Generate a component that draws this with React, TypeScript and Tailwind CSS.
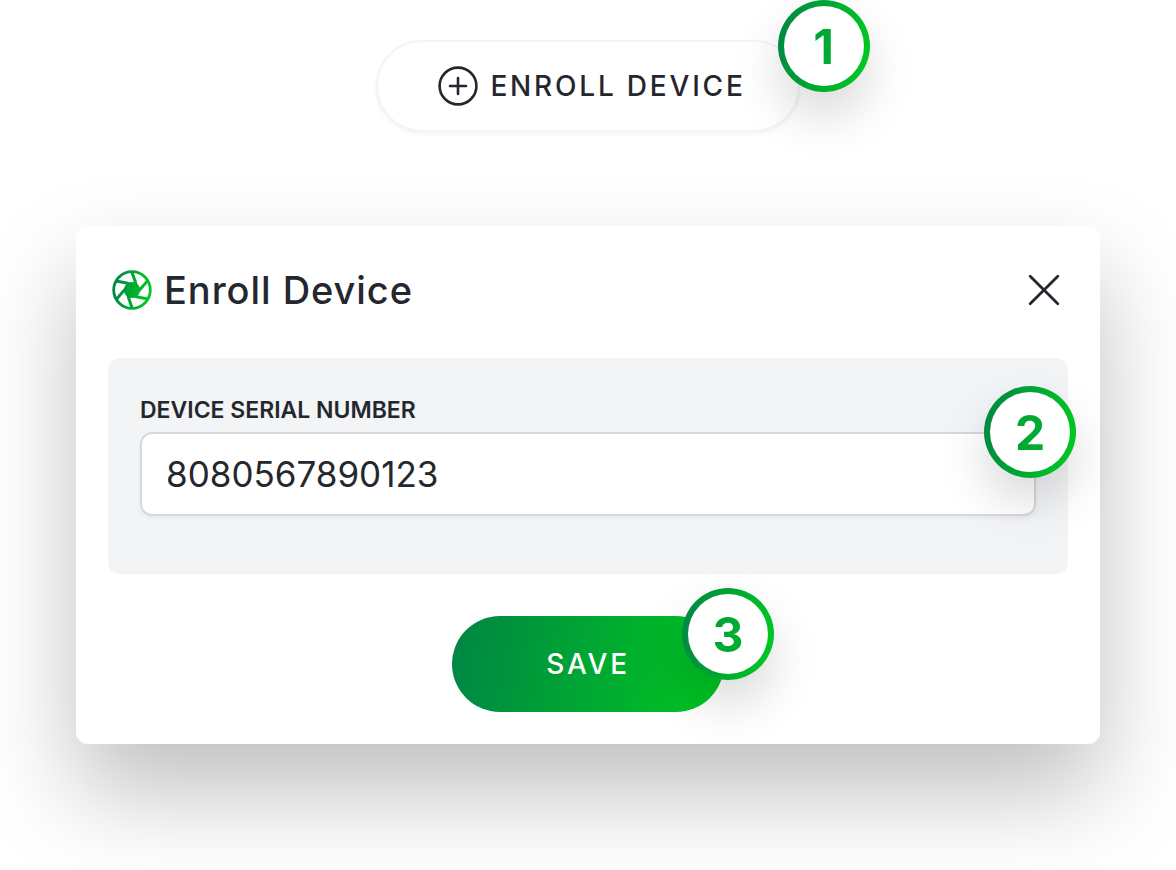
import React, { useState } from 'react';

interface StepBadgeProps {
    step: number;
    className: string;
}

// Numbered callout that sits over the corner of a control
const StepBadge: React.FC<StepBadgeProps> = ({ step, className }) => (
    <span
        className={`absolute flex size-[92px] rounded-full bg-linear-[100deg] from-[#008545] to-[#00cc1f] p-[6px] shadow-[0_24px_48px_rgba(0,0,0,0.15)] ${className}`}
    >
        <span className="flex flex-1 items-center justify-center rounded-full bg-white pt-[2px]">
            <span className="bg-linear-[100deg] from-[#00a236] to-[#00b02f] bg-clip-text text-5xl font-bold text-transparent">
                {step}
            </span>
        </span>
    </span>
);

const PlusCircleIcon = () => (
    <svg className="size-10" viewBox="0 0 40 40" fill="none" stroke="currentColor" strokeWidth="2.6" strokeLinecap="round" aria-hidden="true">
        <circle cx="20" cy="20" r="18.4" />
        <path d="M20 12v16M12 20h16" />
    </svg>
);

const CloseIcon = () => (
    <svg className="size-8" viewBox="0 0 32 32" fill="none" stroke="currentColor" strokeWidth="2.8" strokeLinecap="round" aria-hidden="true">
        <path d="M2.2 2.2l27.6 27.6M29.8 2.2L2.2 29.8" />
    </svg>
);

const BLADES = [0, 60, 120, 180, 240, 300];

const ApertureIcon = () => (
    <svg className="size-10" viewBox="-20 -20 40 40" aria-hidden="true">
        <defs>
            <linearGradient id="aperture" gradientUnits="userSpaceOnUse" x1="-19" y1="-3" x2="19" y2="3">
                <stop offset="0" stopColor="#008545" />
                <stop offset="1" stopColor="#00cc1f" />
            </linearGradient>
        </defs>
        <mask id="blades" maskUnits="userSpaceOnUse" x="-20" y="-20" width="40" height="40">
            <circle r="18.3" fill="none" stroke="#fff" strokeWidth="2.8" />
            {BLADES.map((angle) => (
                <g key={angle} transform={`rotate(${angle})`}>
                    <path d="M-0.3 -18.4L3.8 -6.8" stroke="#fff" strokeWidth="3" />
                    <path d="M0 0L3.6 -6.8L7.7 -0.3Z" fill="#fff" stroke="#fff" strokeWidth="2.6" strokeLinejoin="round" />
                </g>
            ))}
        </mask>
        <rect x="-20" y="-20" width="40" height="40" fill="url(#aperture)" mask="url(#blades)" />
    </svg>
);

const App: React.FC = () => {
    const [serial, setSerial] = useState('8080567890123');

    return (
        <main className="flex flex-col items-center bg-white px-[76px] pt-10 pb-[126px] font-['Inter',sans-serif] text-[#24272d]">
            <div className="relative">
                <button
                    type="button"
                    className="flex h-[92px] items-center gap-3 rounded-full border-2 border-[#f4f4f4] bg-white pr-[52px] pl-[60px] text-[28px] font-medium tracking-widest shadow-[0_2px_4px_rgba(0,0,0,0.05)]"
                >
                    <PlusCircleIcon />
                    ENROLL DEVICE
                </button>
                <StepBadge step={1} className="-top-10 -right-[70px]" />
            </div>

            <form
                role="dialog"
                aria-labelledby="enroll-title"
                onSubmit={(e) => e.preventDefault()}
                className="mt-[94px] flex w-full flex-col items-center rounded-xl bg-white px-8 pb-8 shadow-[0_48px_96px_rgba(0,0,0,0.25)]"
            >
                <header className="mb-1 flex h-32 w-full items-center gap-3 pr-2 pl-1">
                    <ApertureIcon />
                    <h1 id="enroll-title" className="flex-1 text-[38px] font-medium tracking-wide">
                        Enroll Device
                    </h1>
                    <button type="button" aria-label="Close">
                        <CloseIcon />
                    </button>
                </header>

                <div className="w-full rounded-xl bg-[#f3f4f6] px-8 pt-8 pb-[58px]">
                    <label htmlFor="serial" className="block pb-[2px] text-[23px] leading-10 font-semibold">
                        DEVICE SERIAL NUMBER
                    </label>
                    <div className="relative">
                        <input
                            id="serial"
                            type="text"
                            value={serial}
                            onChange={(e) => setSerial(e.target.value)}
                            className="block h-[84px] w-full rounded-xl border-2 border-[#d5d8dc] bg-white px-6 text-[35px] shadow-[0_2px_4px_rgba(0,0,0,0.05)]"
                        />
                        <StepBadge step={2} className="-top-[46px] -right-10" />
                    </div>
                </div>

                <div className="relative mt-[42px]">
                    <button
                        type="submit"
                        className="h-24 w-[272px] rounded-full bg-linear-[100deg] from-[#008545] to-[#00c820] text-[28px] font-medium tracking-widest text-white"
                    >
                        SAVE
                    </button>
                    <StepBadge step={3} className="-top-7 -right-[50px]" />
                </div>
            </form>
        </main>
    );
};

export default App;
